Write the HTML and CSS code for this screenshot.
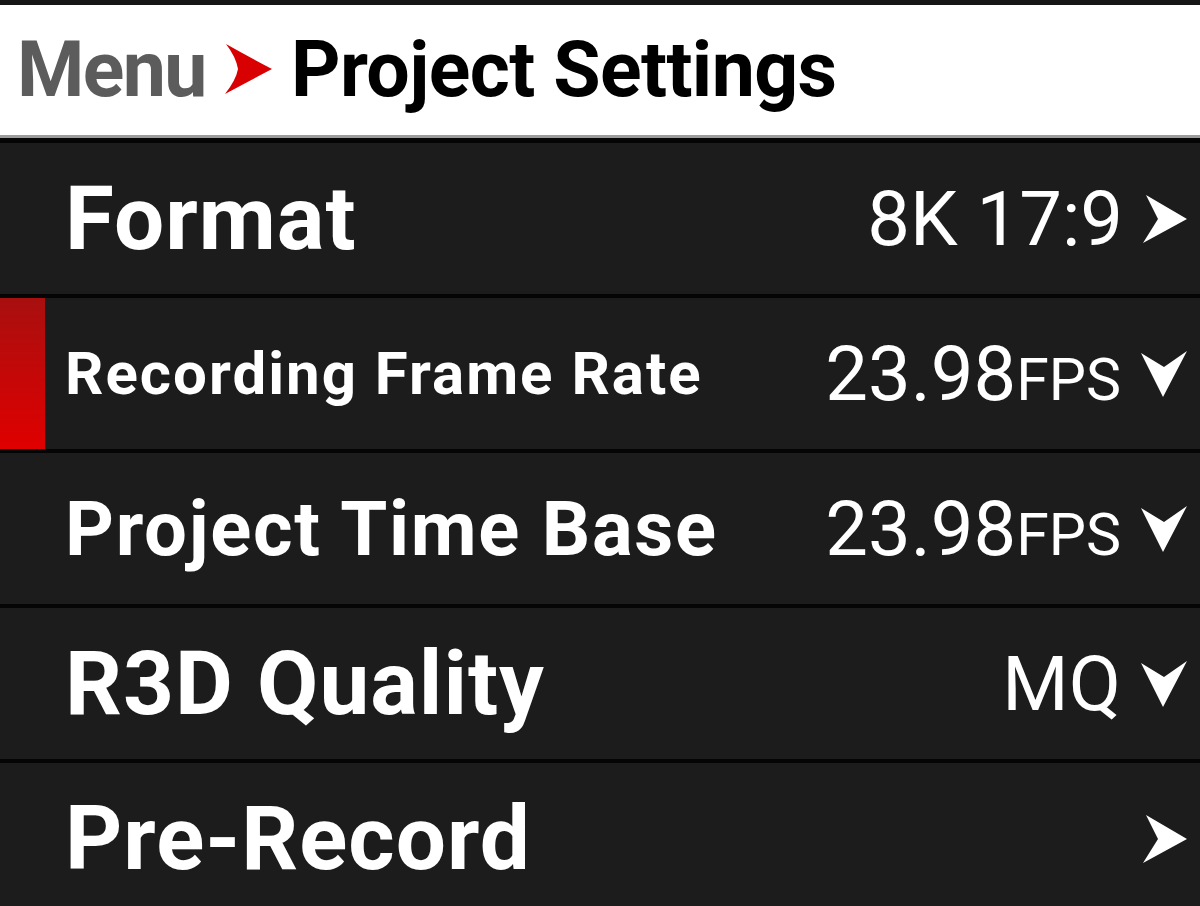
FILE: index.html
```html
<!DOCTYPE html>
<html lang="en">
<head>
  <meta charset="UTF-8">
  <meta name="viewport" content="width=device-width, initial-scale=1.0">
  <title>Project Settings</title>
  <link rel="stylesheet" href="styles.css">
</head>
<body>
  <div class="topline"></div>
  <header class="crumbs">
    <span class="crumb-parent">Menu</span>
    <svg class="crumb-sep" viewBox="0 0 47 50" width="47" height="50">
      <path d="M1 0 Q24 13 47 25 Q24 37 0 50 Q11 36 13 25 Q11 13 1 0 Z" fill="#d80000"/>
    </svg>
    <span class="crumb-current">Project Settings</span>
  </header>

  <ul class="settings">
    <li class="row">
      <span class="label label-xl">Format</span>
      <span class="value">8K 17:9</span>
      <svg class="icon-next" viewBox="0 0 44 48" width="44" height="48">
        <path d="M3 0 L44 24 L0 48 L15 24 Z" fill="#fff"/>
      </svg>
    </li>
    <li class="row active">
      <span class="label label-sm">Recording Frame Rate</span>
      <span class="value">23.98<small>FPS</small></span>
      <svg class="icon-drop" viewBox="0 0 46 46" width="46" height="46">
        <path d="M0 2 L23 16 L46 0 L22 46 Z" fill="#fff"/>
      </svg>
    </li>
    <li class="row">
      <span class="label label-md">Project Time Base</span>
      <span class="value">23.98<small>FPS</small></span>
      <svg class="icon-drop" viewBox="0 0 46 46" width="46" height="46">
        <path d="M0 2 L23 16 L46 0 L22 46 Z" fill="#fff"/>
      </svg>
    </li>
    <li class="row">
      <span class="label label-xl">R3D Quality</span>
      <span class="value">MQ</span>
      <svg class="icon-drop" viewBox="0 0 46 46" width="46" height="46">
        <path d="M0 2 L23 16 L46 0 L22 46 Z" fill="#fff"/>
      </svg>
    </li>
    <li class="row">
      <span class="label label-xl">Pre-Record</span>
      <span class="value"></span>
      <svg class="icon-next" viewBox="0 0 44 48" width="44" height="48">
        <path d="M3 0 L44 24 L0 48 L15 24 Z" fill="#fff"/>
      </svg>
    </li>
  </ul>
</body>
</html>
```

FILE: styles.css
```css
:root {
  --row-bg: #1c1c1c;
  --rule: #050505;
  --red: #d80000;
}

body {
  margin: 0;
  background-color: var(--row-bg);
  font-family: Roboto, "Liberation Sans", sans-serif;
  color: #fff;
  overflow: hidden;
}

.topline {
  height: 5px;
  background-color: #161616;
}

.crumbs {
  display: flex;
  align-items: center;
  gap: 19px;
  height: 130px;
  padding-left: 17px;
  background-color: #fff;
  border-bottom: 3px solid #9c9c9c;
  font-size: 77px;
  font-weight: 700;
  letter-spacing: -0.6px;
}

.crumb-parent {
  color: #5c5c5c;
  letter-spacing: -1.6px;
}

.crumb-current {
  color: #000;
}

.crumb-sep {
  display: block;
  margin-top: -2px;
}

.settings {
  list-style: none;
  margin: 0;
  padding: 0;
  border-top: 5px solid var(--rule);
}

.row {
  display: flex;
  align-items: center;
  height: 151px;
  padding: 0 13px 0 65px;
  border-bottom: 4px solid var(--rule);
}

.row.active {
  background: linear-gradient(to bottom, #a80f0f, #e00000) no-repeat 0 0 / 45px 100%, var(--row-bg);
}

.label {
  flex: 1;
  font-weight: 700;
  white-space: nowrap;
}

.label-xl {
  font-size: 89px;
  letter-spacing: 1px;
}

.label-md {
  font-size: 76px;
  letter-spacing: 1.7px;
}

.label-sm {
  font-size: 60px;
  letter-spacing: 2px;
}

.value {
  font-size: 76px;
  font-weight: 400;
  margin-right: 20px;
  white-space: nowrap;
}

.value small {
  font-size: 59px;
}

.icon-next,
.icon-drop {
  display: block;
  flex-shrink: 0;
}
```
